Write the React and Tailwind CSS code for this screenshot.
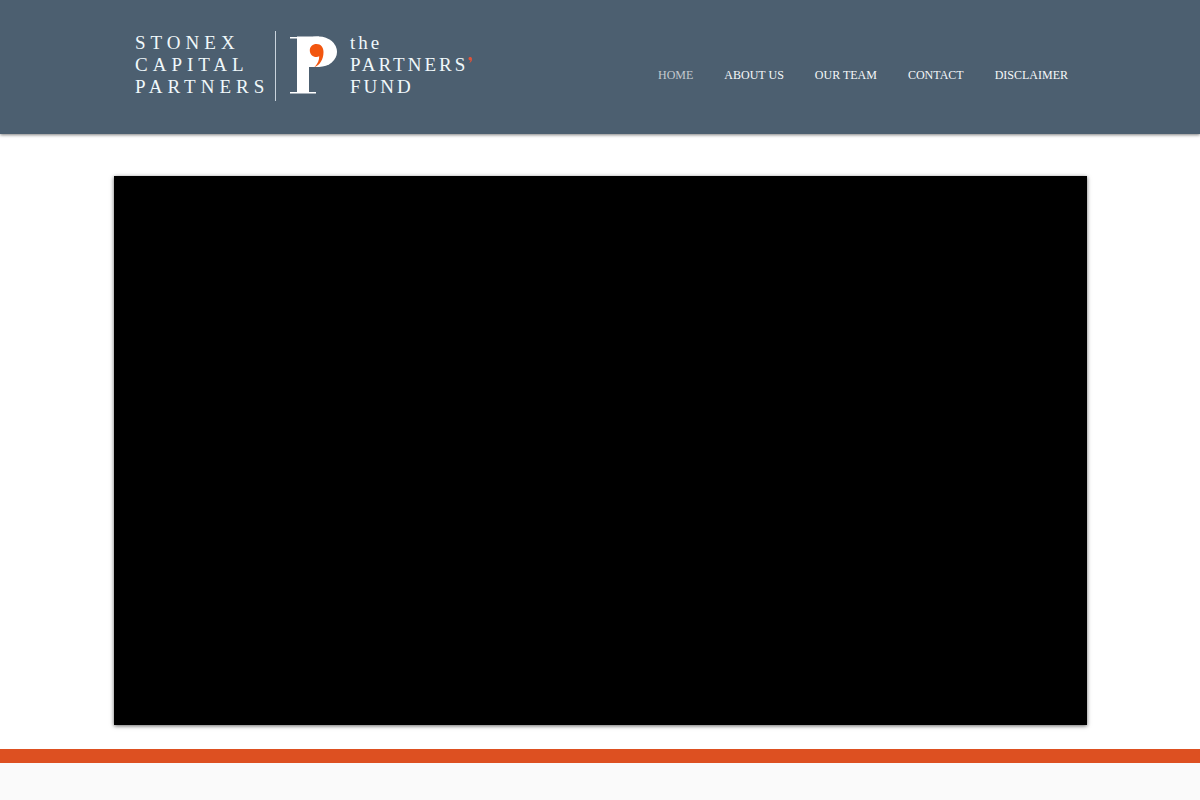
const links = ["Home", "About Us", "Our Team", "Contact", "Disclaimer"];

function PartnersMark() {
  return (
    <svg className="mb-0.5 h-[58px] w-12" viewBox="0 0 48 58" fill="none" aria-hidden="true">
      <g fill="#ffffff">
        <rect x="0" y="1" width="20" height="1.5" />
        <rect x="7" y="1" width="12" height="56" />
        <rect x="0" y="56" width="26" height="1.5" />
        <rect x="7" y="0.5" width="22" height="30.5" />
        <rect x="9" y="0.5" width="38" height="30.5" rx="18" ry="15.25" />
      </g>
      <path
        d="M19.8 14.5C19.8 10.6 22.7 8 26.5 8C31 8 33.5 11.3 33.5 16C33.5 23.5 30 29 24.3 31.2C28 27.7 29.3 24.2 29.2 20.3C28.4 20.8 27.5 21 26.4 21C22.7 21 19.8 18.3 19.8 14.5Z"
        fill="#f2560f"
      />
    </svg>
  );
}

function Logo() {
  return (
    <a
      href="#home"
      className="flex items-center font-['Liberation_Serif',serif] text-[19px] leading-[22px] text-[#f0f8fb]"
    >
      <span className="mb-0.5 w-[140px] tracking-[5px]">
        <span className="block">STONEX</span>
        <span className="block">CAPITAL</span>
        <span className="block">PARTNERS</span>
      </span>
      <span className="mr-3.5 h-[70px] w-px bg-[#c9d3dc]" />
      <PartnersMark />
      <span className="mb-0.5 ml-3 tracking-[3px]">
        <span className="block">the</span>
        <span className="flex">
          PARTNERS
          <svg className="mt-0.5 h-2 w-1.5" viewBox="0 0 6 8" aria-hidden="true">
            <path d="M0.5 2.5C0.5 0.5 4 0.3 4 3C4 5 3 6.5 1 7C2 6 2.5 5.2 2.5 4.3C1.3 4.5 0.5 3.7 0.5 2.5Z" fill="#e0533a" />
          </svg>
        </span>
        <span className="block">FUND</span>
      </span>
    </a>
  );
}

export default function App() {
  return (
    <div className="min-h-screen bg-[#fafafa]">
      <header className="relative bg-[#4c5f70] shadow-[0_1px_3px_rgba(0,0,0,0.5)]">
        <div className="mx-auto flex max-w-[980px] items-start justify-between pt-[31px] pr-[22px] pb-[33px] pl-[25px]">
          <Logo />
          <nav className="mt-9">
            <ul className="flex gap-[31px] font-['Liberation_Serif',serif] text-xs leading-4">
              {links.map((link, i) => (
                <li key={link}>
                  <a
                    href={`#${link.toLowerCase().replace(" ", "-")}`}
                    aria-current={i === 0 ? "page" : undefined}
                    className={i === 0 ? "uppercase text-[#c3c9ce]" : "uppercase text-[#f5f7f9]"}
                  >
                    {link}
                  </a>
                </li>
              ))}
            </ul>
          </nav>
        </div>
      </header>

      <main className="bg-white px-4 pt-[42px] pb-6">
        <div className="mx-auto aspect-[973/549] max-w-[973px] bg-black shadow-[0_1px_4px_rgba(0,0,0,0.6)]" />
      </main>

      <div className="h-3.5 bg-[#dd5021]" />
    </div>
  );
}
